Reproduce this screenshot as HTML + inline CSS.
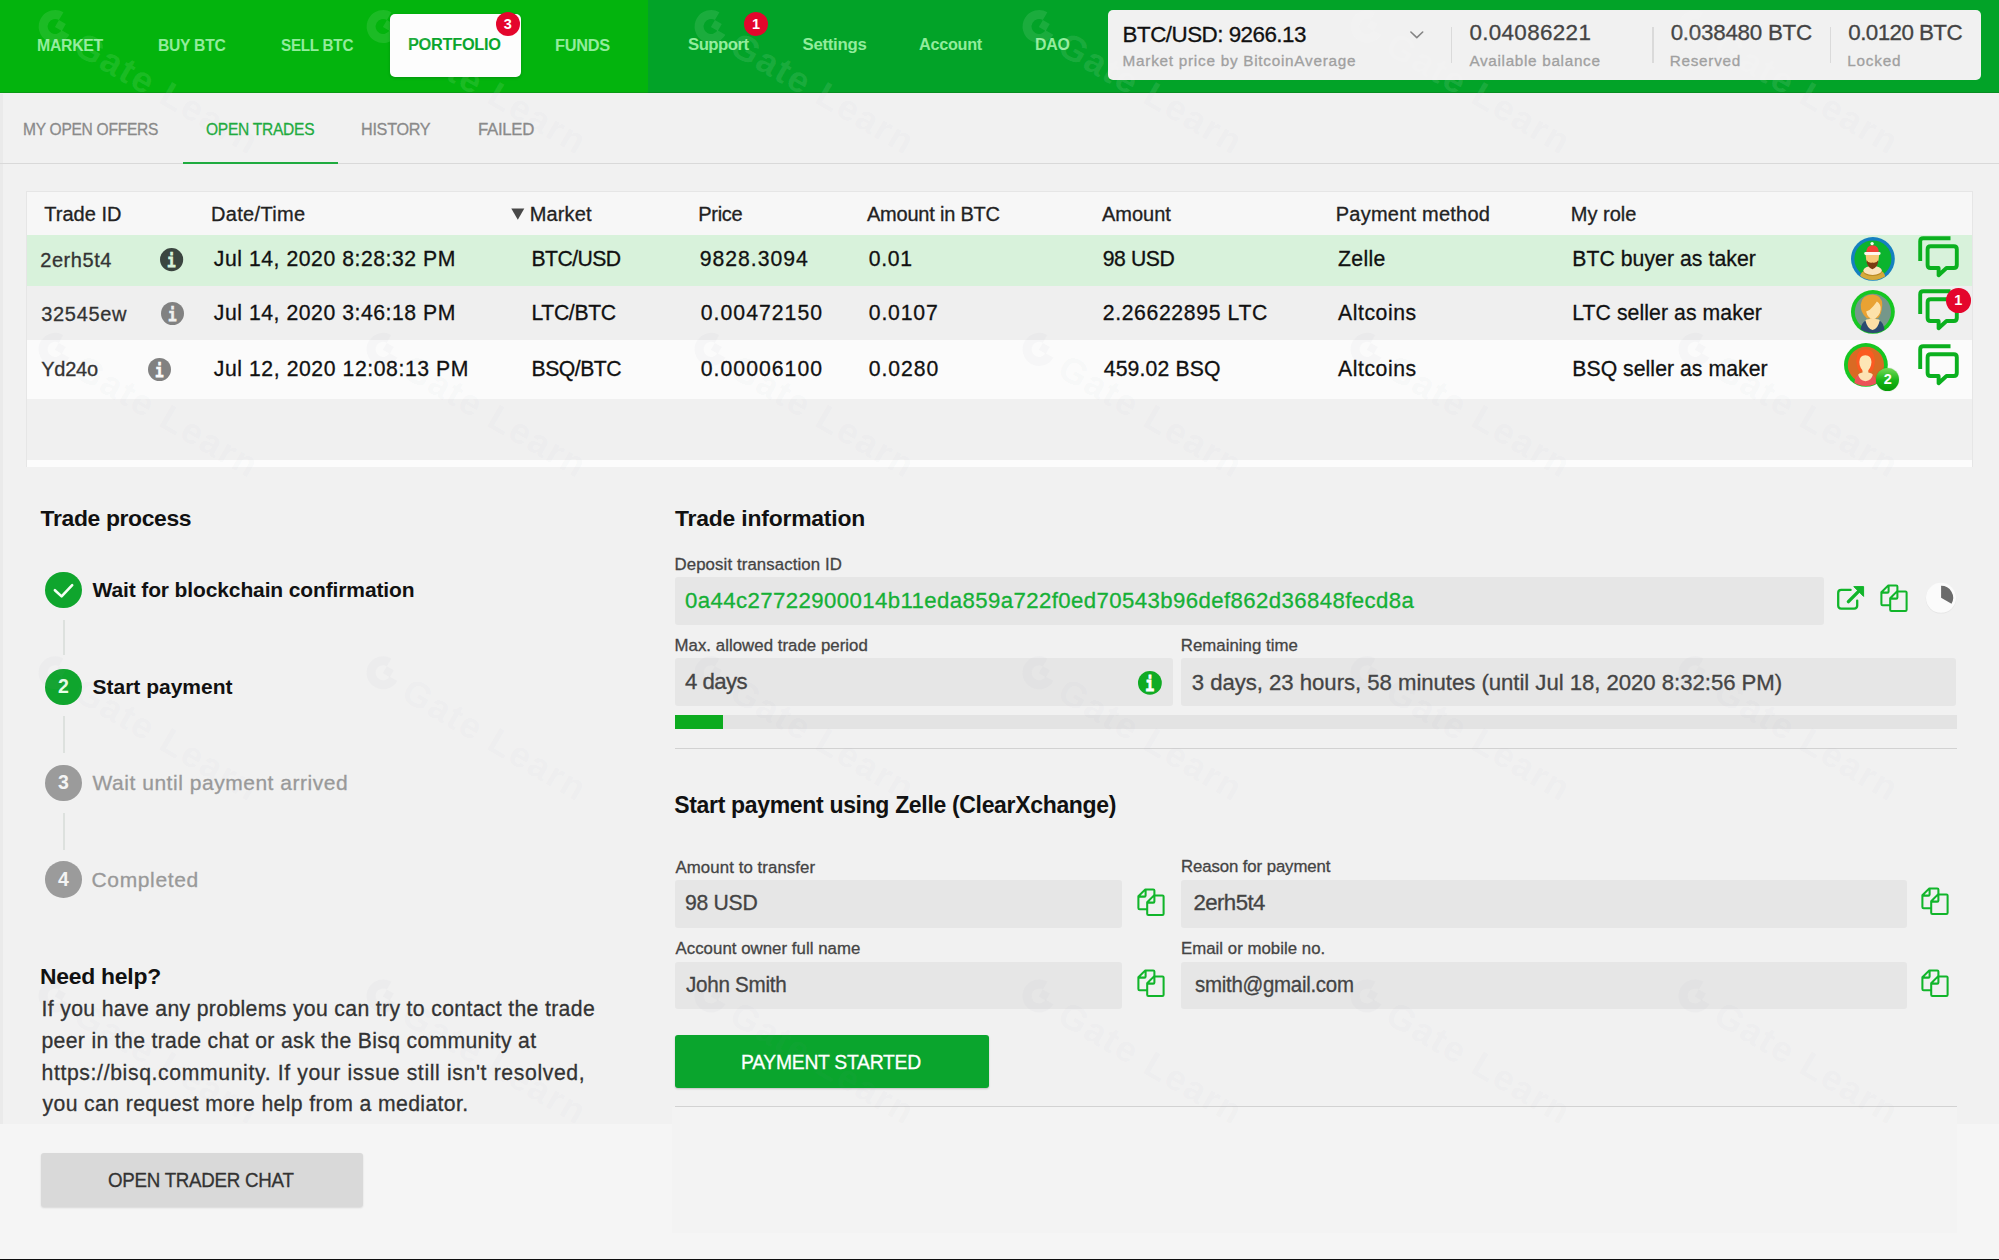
<!DOCTYPE html>
<html lang="en">
<head>
<meta charset="utf-8">
<title>Bisq - Portfolio - Open trades</title>
<style>
*{box-sizing:border-box;margin:0;padding:0}
html,body{width:1999px;height:1260px;overflow:hidden;background:#f1f1f1}
body{position:relative;font-family:"Liberation Sans",sans-serif}
.abs,.t{position:absolute}
.t{white-space:nowrap;line-height:1;transform-origin:0 50%;display:block;-webkit-text-stroke:0.3px currentColor}
.t.b{-webkit-text-stroke:0}
.badge{position:absolute;border-radius:50%;background:#e4062c;color:#fff;font-weight:700;text-align:center}
.field{position:absolute;background:#e6e6e6;border-radius:3px}
.lbl{color:#444}
svg{position:absolute;overflow:visible}
</style>
</head>
<body>
<!-- top navigation -->
<div class="abs" id="nav-left" style="left:0;top:0;width:648px;height:93.4px;background:#03b40d;border-bottom:1.6px solid #0a9a14"></div>
<div class="abs" id="nav-right" style="left:648px;top:0;width:1351px;height:93.4px;background:#02a328;border-bottom:1.6px solid #078e22"></div>
<div class="abs" id="nav-sel" style="left:389.6px;top:13.6px;width:131px;height:63px;background:#fdfdfd;border-radius:5px;box-shadow:0 1px 3px rgba(0,0,0,.18)"></div>
<div class="abs" id="infobox" style="left:1108px;top:10.2px;width:872.5px;height:69.4px;background:#f1f1f1;border-radius:5px"></div>
<div class="abs" style="left:1450.5px;top:27px;width:1.5px;height:36px;background:#dadada"></div>
<div class="abs" style="left:1652px;top:27px;width:1.5px;height:36px;background:#dadada"></div>
<div class="abs" style="left:1829.5px;top:27px;width:1.5px;height:36px;background:#dadada"></div>
<svg style="left:1408px;top:29px" width="18" height="12" viewBox="0 0 18 12"><path d="M2.9 3 L8.8 8.6 L14.7 3" fill="none" stroke="#848484" stroke-width="1.6" stroke-linecap="round" stroke-linejoin="round"/></svg>

<div class="abs" style="left:0;top:94px;width:2.8px;height:1164px;background:#eaeaea"></div>
<!-- sub tabs -->
<div class="abs" style="left:0;top:163px;width:1999px;height:1px;background:#d9d9d9"></div>
<div class="abs" style="left:182.5px;top:161.6px;width:155.7px;height:2.4px;background:#1fab3f"></div>

<!-- table -->
<div class="abs" id="table" style="left:25.5px;top:190.5px;width:1947.5px;height:276.5px;background:#f7f7f7;border:1px solid #e6e6e6"></div>
<div class="abs" style="left:26.5px;top:235px;width:1945.5px;height:51.3px;background:#d8f2db"></div>
<div class="abs" style="left:26.5px;top:286.3px;width:1945.5px;height:53.7px;background:#efefef"></div>
<div class="abs" style="left:26.5px;top:340px;width:1945.5px;height:59px;background:#fbfbfb"></div>
<div class="abs" style="left:26.5px;top:399px;width:1945.5px;height:60.5px;background:#f0f0f0"></div>
<div class="abs" style="left:26.5px;top:459.5px;width:1945.5px;height:7px;background:#fcfcfc"></div>
<svg style="left:511px;top:207.5px" width="14" height="12" viewBox="0 0 14 12"><path d="M0.3 0.5 H13.3 L6.8 11.8 Z" fill="#484848"/></svg>


<!-- left panel: trade process -->
<div class="abs" style="left:63px;top:620px;width:1.5px;height:35px;background:#dde1de"></div>
<div class="abs" style="left:63px;top:716px;width:1.6px;height:36.5px;background:#dde1de"></div>
<div class="abs" style="left:63px;top:813px;width:1.6px;height:36.5px;background:#dde1de"></div>
<div class="abs" style="left:45px;top:571.7px;width:36.7px;height:36.7px;border-radius:50%;background:#0fa52d"></div>
<svg style="left:45px;top:571.7px" width="36.7" height="36.7" viewBox="0 0 36.7 36.7"><path d="M9.9 18.2 L16.6 24.4 L27.2 13.1" fill="none" stroke="#f4fff4" stroke-width="2.6" stroke-linecap="round" stroke-linejoin="round"/></svg>
<div class="abs" style="left:45px;top:668.5px;width:36.7px;height:36.7px;border-radius:50%;background:#0fa52d"></div>
<div class="abs" style="left:45px;top:764.5px;width:36.7px;height:36.7px;border-radius:50%;background:#9b9b9b"></div>
<div class="abs" style="left:45px;top:861.3px;width:36.7px;height:36.7px;border-radius:50%;background:#9b9b9b"></div>

<!-- bottom lighter band -->
<div class="abs" style="left:0;top:1124px;width:1999px;height:136px;background:#f5f5f5"></div>
<div class="abs" style="left:672px;top:1107px;width:1285px;height:125.5px;background:#f3f3f3"></div>
<div class="abs" id="btn-chat" style="left:41px;top:1152.6px;width:321.8px;height:54px;background:#d9d9d9;border-radius:3px;box-shadow:0 1px 2px rgba(0,0,0,.12)"></div>

<!-- right panel -->
<div class="field" style="left:674.5px;top:576.5px;width:1149px;height:48px"></div>
<div class="field" style="left:674.5px;top:658.4px;width:498px;height:47.8px"></div>
<div class="field" style="left:1181.2px;top:658.4px;width:775.3px;height:47.8px"></div>
<div class="abs" style="left:674.5px;top:714.8px;width:1282.5px;height:14.4px;background:#e3e3e3"></div>
<div class="abs" style="left:674.5px;top:714.8px;width:48.5px;height:14.4px;background:#0cab1f"></div>
<div class="abs" style="left:674.5px;top:748px;width:1282.5px;height:1.2px;background:#d2d2d2"></div>
<div class="field" style="left:674.5px;top:880px;width:447.7px;height:47.5px"></div>
<div class="field" style="left:1181.2px;top:880px;width:725.5px;height:47.5px"></div>
<div class="field" style="left:674.5px;top:962px;width:447.7px;height:47px"></div>
<div class="field" style="left:1181.2px;top:962px;width:725.5px;height:47px"></div>
<div class="abs" id="btn-pay" style="left:674.5px;top:1034.5px;width:314.3px;height:53px;background:#0aa52d;border-radius:3px;box-shadow:0 1px 2px rgba(0,0,0,.2)"></div>
<div class="abs" style="left:674.5px;top:1105.8px;width:1282.5px;height:1.2px;background:#d2d2d2"></div>

<svg width="0" height="0" style="left:0;top:0">
<defs>
<clipPath id="avc"><circle cx="22" cy="22" r="21.3"/></clipPath>
</defs>
</svg>
<!-- info icons in table -->
<svg class="ic-info" style="left:160.1px;top:248.3px;fill:#3b4540;--ic:#d8f2db" width="23.2" height="23.2" viewBox="0 0 23 23"><circle cx="11.5" cy="11.5" r="11.5"/><text x="11.3" y="19" text-anchor="middle" font-family="DejaVu Sans Mono, Liberation Mono, monospace" font-weight="bold" font-size="18" fill="var(--ic,#fff)" stroke="var(--ic,#fff)" stroke-width=".75" textLength="8.6" lengthAdjust="spacingAndGlyphs">i</text></svg>
<svg class="ic-info" style="left:160.9px;top:301.9px;fill:#818181;--ic:#efefef" width="23" height="23" viewBox="0 0 23 23"><circle cx="11.5" cy="11.5" r="11.5"/><text x="11.3" y="19" text-anchor="middle" font-family="DejaVu Sans Mono, Liberation Mono, monospace" font-weight="bold" font-size="18" fill="var(--ic,#fff)" stroke="var(--ic,#fff)" stroke-width=".75" textLength="8.6" lengthAdjust="spacingAndGlyphs">i</text></svg>
<svg class="ic-info" style="left:148.3px;top:358.2px;fill:#818181;--ic:#fbfbfb" width="23" height="23" viewBox="0 0 23 23"><circle cx="11.5" cy="11.5" r="11.5"/><text x="11.3" y="19" text-anchor="middle" font-family="DejaVu Sans Mono, Liberation Mono, monospace" font-weight="bold" font-size="18" fill="var(--ic,#fff)" stroke="var(--ic,#fff)" stroke-width=".75" textLength="8.6" lengthAdjust="spacingAndGlyphs">i</text></svg>
<svg class="ic-info" style="left:1137.5px;top:671.2px;fill:#10ab24;--ic:#fff" width="23.8" height="23.8" viewBox="0 0 23 23"><circle cx="11.5" cy="11.5" r="11.5"/><text x="11.3" y="19" text-anchor="middle" font-family="DejaVu Sans Mono, Liberation Mono, monospace" font-weight="bold" font-size="18" fill="var(--ic,#fff)" stroke="var(--ic,#fff)" stroke-width=".75" textLength="8.6" lengthAdjust="spacingAndGlyphs">i</text></svg>

<!-- avatars -->
<svg style="left:1850.6px;top:237px" width="43.8" height="43.8" viewBox="0 0 44 44">
<circle cx="22" cy="22" r="22" fill="#1580c0"/><circle cx="22" cy="22" r="18.6" fill="#0bb42e"/>
<g clip-path="url(#avc)"><ellipse cx="21.7" cy="40" rx="12.6" ry="8.4" fill="#d5a93a"/><ellipse cx="21.7" cy="34.4" rx="9.5" ry="4.9" fill="#b98a25"/><ellipse cx="21.7" cy="33.6" rx="9.2" ry="4.5" fill="#fbe4bb"/>
<path d="M14.6 17 H28.4 L27.6 23.5 Q26 29 21.5 30 Q17 29 15.4 23.5 Z" fill="#f9c877"/>
<path d="M15.6 23 Q17.5 26.6 21.5 25.6 Q25.5 26.6 27.4 23 Q27.6 29.6 21.5 32.4 Q15.4 29.6 15.6 23 Z" fill="#7a3a12"/>
<path d="M15.3 16.5 Q15.3 8.4 21.6 8.4 Q28 8.4 28 16.5 Z" fill="#ef4136"/>
<rect x="13.3" y="15.1" width="16.4" height="2.9" rx="1.3" fill="#fff7ee"/><circle cx="21.2" cy="6.6" r="1.7" fill="#f4fff0"/></g></svg>

<svg style="left:1850.7px;top:290.4px" width="43.8" height="43.8" viewBox="0 0 44 44">
<circle cx="22" cy="22" r="22" fill="#16c722"/><circle cx="22" cy="22" r="18.2" fill="#75978a"/>
<g clip-path="url(#avc)"><path d="M9 44 Q9.5 31.5 16 30.6 H27.4 Q33.6 31.5 34 44 Z" fill="#2b4b70"/>
<path d="M14.6 30.8 Q14.4 29.6 18.8 29.2 V25 H24.6 V29.2 Q29 29.6 28.8 30.8 Q27 39 21.7 40.2 Q16.4 39 14.6 30.8 Z" fill="#fde0a6"/>
<path d="M21.8 4.4 Q31.6 5 31.4 15 Q31 24 27 28.4 L16 28.6 Q9.4 23 9.8 14.6 Q10.4 5 21.8 4.4 Z" fill="#e9a233"/>
<path d="M26 11.6 Q30.4 14.6 29.8 19.6 Q29 26.6 22.6 29.4 Q16.6 28.4 15.2 21.6 Q19 20.6 22.6 16 Q24.8 13.4 26 11.6 Z" fill="#fde2aa"/></g></svg>

<svg style="left:1843.8px;top:343.4px" width="43.8" height="43.8" viewBox="0 0 44 44">
<circle cx="22" cy="22" r="22" fill="#16c722"/><circle cx="22" cy="22" r="18.2" fill="#d96a24"/>
<g clip-path="url(#avc)"><path d="M10 44 Q10.4 32.4 16 31.6 H27 Q32.6 32.4 33 44 Z" fill="#ec5358"/>
<path d="M12.4 17.4 Q12.6 6.6 21.6 6.4 Q30.8 6.6 31 17.4 Q31 24 28 28.6 H15.4 Q12.4 24 12.4 17.4 Z" fill="#fb5a22"/>
<path d="M14.2 32 Q14.6 30.4 18.6 29.6 V26 H24.4 V29.6 Q28.6 30.4 29 32 Q27.6 37.6 21.6 38.4 Q15.6 37.6 14.2 32 Z" fill="#fde2b4"/>
<path d="M21.4 12.2 Q27.4 12.4 27.6 19 Q27.4 26.6 21.4 29.2 Q15.6 26.6 15.4 19 Q15.6 12.4 21.4 12.2 Z" fill="#fde6b6"/></g></svg>
<div class="abs" style="left:1876.4px;top:368px;width:23px;height:23px;border-radius:50%;background:linear-gradient(#74d957,#16b516 55%,#069a06);box-shadow:0 0 1px rgba(0,90,0,.5)"></div>

<!-- chat icons -->
<svg class="ic-chat" style="left:1917.9px;top:235.9px" width="42" height="42" viewBox="0 0 42 42"><path d="M2.2 25 V5.2 Q2.2 2.2 5.2 2.2 H32.5" fill="none" stroke="#0bb01f" stroke-width="3.9" stroke-linecap="butt"/><path d="M12.6 10.2 H35.8 Q38.8 10.2 38.8 13.2 V29 Q38.8 32 35.8 32 H28.5 L20.6 39.2 V32 H12.6 Q9.6 32 9.6 29 V13.2 Q9.6 10.2 12.6 10.2 Z" fill="none" stroke="#0bb01f" stroke-width="3.9" stroke-linejoin="round"/></svg>
<svg class="ic-chat" style="left:1917.9px;top:289.2px" width="42" height="42" viewBox="0 0 42 42"><path d="M2.2 25 V5.2 Q2.2 2.2 5.2 2.2 H32.5" fill="none" stroke="#0bb01f" stroke-width="3.9" stroke-linecap="butt"/><path d="M12.6 10.2 H35.8 Q38.8 10.2 38.8 13.2 V29 Q38.8 32 35.8 32 H28.5 L20.6 39.2 V32 H12.6 Q9.6 32 9.6 29 V13.2 Q9.6 10.2 12.6 10.2 Z" fill="none" stroke="#0bb01f" stroke-width="3.9" stroke-linejoin="round"/></svg>
<svg class="ic-chat" style="left:1917.9px;top:344.4px" width="42" height="42" viewBox="0 0 42 42"><path d="M2.2 25 V5.2 Q2.2 2.2 5.2 2.2 H32.5" fill="none" stroke="#0bb01f" stroke-width="3.9" stroke-linecap="butt"/><path d="M12.6 10.2 H35.8 Q38.8 10.2 38.8 13.2 V29 Q38.8 32 35.8 32 H28.5 L20.6 39.2 V32 H12.6 Q9.6 32 9.6 29 V13.2 Q9.6 10.2 12.6 10.2 Z" fill="none" stroke="#0bb01f" stroke-width="3.9" stroke-linejoin="round"/></svg>

<!-- badges -->
<div class="badge" style="left:495.6px;top:11.8px;width:24.4px;height:24.4px"></div>
<div class="badge" style="left:743.8px;top:11.8px;width:24.4px;height:24.4px"></div>
<div class="badge" style="left:1946px;top:288.2px;width:24.6px;height:24.6px"></div>

<!-- tx icons -->
<svg style="left:1836.4px;top:585px" width="29" height="26" viewBox="0 0 29 26"><path d="M14.6 4.9 H5.2 Q2.2 4.9 2.2 7.9 V20.6 Q2.2 23.6 5.2 23.6 H18.2 Q21.2 23.6 21.2 20.6 V15.6" fill="none" stroke="#11b52a" stroke-width="2.3" stroke-linecap="round"/><path d="M12.4 16.6 L23.6 5.4" fill="none" stroke="#11b52a" stroke-width="3.4" stroke-linecap="round"/><path d="M17.8 1.6 H27.6 V11.4 Z" fill="#11b52a" stroke="#11b52a" stroke-width="1" stroke-linejoin="round"/></svg>
<svg class="ic-copy" style="left:1880.2px;top:584.4px" width="28" height="28" viewBox="0 0 28 28"><path d="M10 21.2 H2.6 Q1.4 21.2 1.4 20 V8.3 L8.3 1.4 H16.2 Q17.4 1.4 17.4 2.6 V7.2 M1.6 8.6 H7.4 Q8.6 8.6 8.6 7.4 V1.6" fill="none" stroke="#11b52a" stroke-width="2.05" stroke-linejoin="round"/><path d="M10.2 14.2 L17 7.4 H25.4 Q26.6 7.4 26.6 8.6 V25.8 Q26.6 27 25.4 27 H11.4 Q10.2 27 10.2 25.8 Z M10.4 14.6 H16.2 Q17.4 14.6 17.4 13.4 V7.6" fill="none" stroke="#11b52a" stroke-width="2.05" stroke-linejoin="round"/></svg>
<svg class="ic-copy" style="left:1136.9px;top:887.6px" width="28" height="28" viewBox="0 0 28 28"><path d="M10 21.2 H2.6 Q1.4 21.2 1.4 20 V8.3 L8.3 1.4 H16.2 Q17.4 1.4 17.4 2.6 V7.2 M1.6 8.6 H7.4 Q8.6 8.6 8.6 7.4 V1.6" fill="none" stroke="#11b52a" stroke-width="2.05" stroke-linejoin="round"/><path d="M10.2 14.2 L17 7.4 H25.4 Q26.6 7.4 26.6 8.6 V25.8 Q26.6 27 25.4 27 H11.4 Q10.2 27 10.2 25.8 Z M10.4 14.6 H16.2 Q17.4 14.6 17.4 13.4 V7.6" fill="none" stroke="#11b52a" stroke-width="2.05" stroke-linejoin="round"/></svg>
<svg class="ic-copy" style="left:1136.9px;top:969.4px" width="28" height="28" viewBox="0 0 28 28"><path d="M10 21.2 H2.6 Q1.4 21.2 1.4 20 V8.3 L8.3 1.4 H16.2 Q17.4 1.4 17.4 2.6 V7.2 M1.6 8.6 H7.4 Q8.6 8.6 8.6 7.4 V1.6" fill="none" stroke="#11b52a" stroke-width="2.05" stroke-linejoin="round"/><path d="M10.2 14.2 L17 7.4 H25.4 Q26.6 7.4 26.6 8.6 V25.8 Q26.6 27 25.4 27 H11.4 Q10.2 27 10.2 25.8 Z M10.4 14.6 H16.2 Q17.4 14.6 17.4 13.4 V7.6" fill="none" stroke="#11b52a" stroke-width="2.05" stroke-linejoin="round"/></svg>
<svg class="ic-copy" style="left:1921.4px;top:887.4px" width="28" height="28" viewBox="0 0 28 28"><path d="M10 21.2 H2.6 Q1.4 21.2 1.4 20 V8.3 L8.3 1.4 H16.2 Q17.4 1.4 17.4 2.6 V7.2 M1.6 8.6 H7.4 Q8.6 8.6 8.6 7.4 V1.6" fill="none" stroke="#11b52a" stroke-width="2.05" stroke-linejoin="round"/><path d="M10.2 14.2 L17 7.4 H25.4 Q26.6 7.4 26.6 8.6 V25.8 Q26.6 27 25.4 27 H11.4 Q10.2 27 10.2 25.8 Z M10.4 14.6 H16.2 Q17.4 14.6 17.4 13.4 V7.6" fill="none" stroke="#11b52a" stroke-width="2.05" stroke-linejoin="round"/></svg>
<svg class="ic-copy" style="left:1921.4px;top:969.2px" width="28" height="28" viewBox="0 0 28 28"><path d="M10 21.2 H2.6 Q1.4 21.2 1.4 20 V8.3 L8.3 1.4 H16.2 Q17.4 1.4 17.4 2.6 V7.2 M1.6 8.6 H7.4 Q8.6 8.6 8.6 7.4 V1.6" fill="none" stroke="#11b52a" stroke-width="2.05" stroke-linejoin="round"/><path d="M10.2 14.2 L17 7.4 H25.4 Q26.6 7.4 26.6 8.6 V25.8 Q26.6 27 25.4 27 H11.4 Q10.2 27 10.2 25.8 Z M10.4 14.6 H16.2 Q17.4 14.6 17.4 13.4 V7.6" fill="none" stroke="#11b52a" stroke-width="2.05" stroke-linejoin="round"/></svg>
<svg style="left:1924.7px;top:582px" width="32" height="32" viewBox="0 0 32 32"><circle cx="16" cy="16.4" r="15.2" fill="#e0e0e0" opacity=".7"/><circle cx="16" cy="15.8" r="15" fill="#fbfbfb"/><path d="M16.1 15.8 V3.8 A12 12 0 0 1 26.5 21.8 Z" fill="#6b6b6b"/></svg>


<!-- bottom black line -->
<div class="abs" style="left:0;top:1258.6px;width:1999px;height:1.4px;background:#0c0c0c"></div>

<span class="t b" style="left:36.60px;top:38.00px;font-size:16.8px;font-weight:700;color:#92ec9c;letter-spacing:-0.300px;transform:scaleX(0.9425);">MARKET</span>
<span class="t b" style="left:158.00px;top:38.00px;font-size:16.8px;font-weight:700;color:#92ec9c;letter-spacing:-0.300px;transform:scaleX(0.9349);">BUY BTC</span>
<span class="t b" style="left:281.00px;top:38.00px;font-size:16.8px;font-weight:700;color:#92ec9c;letter-spacing:-0.300px;transform:scaleX(0.9096);">SELL BTC</span>
<span class="t b" style="left:408.00px;top:37.00px;font-size:16.8px;font-weight:700;color:#0ba52d;letter-spacing:-0.300px;transform:scaleX(0.9742);">PORTFOLIO</span>
<span class="t b" style="left:555.00px;top:38.00px;font-size:16.8px;font-weight:700;color:#92ec9c;letter-spacing:-0.300px;transform:scaleX(0.9746);">FUNDS</span>
<span class="t b" style="left:688.00px;top:37.00px;font-size:16.8px;font-weight:700;color:#92ec9c;letter-spacing:-0.554px;">Support</span>
<span class="t b" style="left:802.60px;top:37.00px;font-size:16.8px;font-weight:700;color:#92ec9c;letter-spacing:-0.295px;">Settings</span>
<span class="t b" style="left:919.00px;top:37.00px;font-size:16.8px;font-weight:700;color:#92ec9c;letter-spacing:-0.300px;transform:scaleX(0.9675);">Account</span>
<span class="t b" style="left:1034.60px;top:37.00px;font-size:16.8px;font-weight:700;color:#92ec9c;letter-spacing:-0.300px;transform:scaleX(0.9484);">DAO</span>
<span class="t" style="left:1122.60px;top:24.00px;font-size:22.4px;color:#111;letter-spacing:-0.520px;">BTC/USD: 9266.13</span>
<span class="t" style="left:1122.60px;top:53.00px;font-size:15.3px;color:#a0a0a0;letter-spacing:0.741px;">Market price by BitcoinAverage</span>
<span class="t" style="left:1469.40px;top:22.00px;font-size:22.4px;color:#444;letter-spacing:0.351px;">0.04086221</span>
<span class="t" style="left:1469.40px;top:53.00px;font-size:15.3px;color:#a0a0a0;letter-spacing:0.680px;">Available balance</span>
<span class="t" style="left:1670.70px;top:22.00px;font-size:22.4px;color:#444;letter-spacing:-0.266px;">0.038480 BTC</span>
<span class="t" style="left:1669.70px;top:53.00px;font-size:15.3px;color:#a0a0a0;letter-spacing:0.734px;">Reserved</span>
<span class="t" style="left:1848.30px;top:22.00px;font-size:22.4px;color:#444;letter-spacing:-0.580px;">0.0120 BTC</span>
<span class="t" style="left:1847.30px;top:53.00px;font-size:15.3px;color:#a0a0a0;letter-spacing:0.776px;">Locked</span>
<span class="t" style="left:23.00px;top:121.00px;font-size:17.4px;color:#8a8a8a;letter-spacing:-0.300px;transform:scaleX(0.8943);">MY OPEN OFFERS</span>
<span class="t" style="left:205.90px;top:121.00px;font-size:17.4px;color:#1fab3f;letter-spacing:-0.300px;transform:scaleX(0.8946);">OPEN TRADES</span>
<span class="t" style="left:360.60px;top:121.00px;font-size:17.4px;color:#8a8a8a;letter-spacing:-0.300px;transform:scaleX(0.9304);">HISTORY</span>
<span class="t" style="left:478.30px;top:121.00px;font-size:17.4px;color:#8a8a8a;letter-spacing:-0.300px;transform:scaleX(0.9654);">FAILED</span>
<span class="t" style="left:44.25px;top:204.00px;font-size:20px;color:#222;letter-spacing:0.019px;">Trade ID</span>
<span class="t" style="left:211.00px;top:204.00px;font-size:20px;color:#222;letter-spacing:0.327px;">Date/Time</span>
<span class="t" style="left:529.75px;top:204.00px;font-size:20px;color:#222;letter-spacing:0.137px;">Market</span>
<span class="t" style="left:698.25px;top:204.00px;font-size:20px;color:#222;letter-spacing:-0.298px;">Price</span>
<span class="t" style="left:867.00px;top:204.00px;font-size:20px;color:#222;letter-spacing:-0.222px;">Amount in BTC</span>
<span class="t" style="left:1102.00px;top:204.00px;font-size:20px;color:#222;letter-spacing:-0.024px;">Amount</span>
<span class="t" style="left:1335.75px;top:204.00px;font-size:20px;color:#222;letter-spacing:0.226px;">Payment method</span>
<span class="t" style="left:1570.75px;top:204.00px;font-size:20px;color:#222;letter-spacing:0.009px;">My role</span>
<span class="t" style="left:40.25px;top:250.00px;font-size:20px;color:#333;letter-spacing:0.549px;">2erh5t4</span>
<span class="t" style="left:213.75px;top:248.00px;font-size:21.2px;color:#111;letter-spacing:0.544px;">Jul 14, 2020 8:28:32 PM</span>
<span class="t" style="left:531.50px;top:248.00px;font-size:21.2px;color:#111;letter-spacing:-0.574px;">BTC/USD</span>
<span class="t" style="left:699.75px;top:248.00px;font-size:21.2px;color:#111;letter-spacing:0.985px;">9828.3094</span>
<span class="t" style="left:868.75px;top:248.00px;font-size:21.2px;color:#111;letter-spacing:0.682px;">0.01</span>
<span class="t" style="left:1102.75px;top:248.00px;font-size:21.2px;color:#111;letter-spacing:-0.427px;">98 USD</span>
<span class="t" style="left:1338.00px;top:248.00px;font-size:21.2px;color:#111;letter-spacing:0.340px;">Zelle</span>
<span class="t" style="left:1572.25px;top:248.00px;font-size:21.2px;color:#111;letter-spacing:0.061px;">BTC buyer as taker</span>
<span class="t" style="left:41.25px;top:304.00px;font-size:20px;color:#333;letter-spacing:0.669px;">32545ew</span>
<span class="t" style="left:213.75px;top:302.00px;font-size:21.2px;color:#111;letter-spacing:0.544px;">Jul 14, 2020 3:46:18 PM</span>
<span class="t" style="left:531.50px;top:302.00px;font-size:21.2px;color:#111;letter-spacing:-0.361px;">LTC/BTC</span>
<span class="t" style="left:700.75px;top:302.00px;font-size:21.2px;color:#111;letter-spacing:1.038px;">0.00472150</span>
<span class="t" style="left:868.75px;top:302.00px;font-size:21.2px;color:#111;letter-spacing:0.846px;">0.0107</span>
<span class="t" style="left:1102.75px;top:302.00px;font-size:21.2px;color:#111;letter-spacing:0.636px;">2.26622895 LTC</span>
<span class="t" style="left:1338.00px;top:302.00px;font-size:21.2px;color:#111;letter-spacing:0.558px;">Altcoins</span>
<span class="t" style="left:1572.25px;top:302.00px;font-size:21.2px;color:#111;letter-spacing:0.087px;">LTC seller as maker</span>
<span class="t" style="left:41.25px;top:359.00px;font-size:20px;color:#333;letter-spacing:-0.240px;">Yd24o</span>
<span class="t" style="left:213.75px;top:358.00px;font-size:21.2px;color:#111;letter-spacing:0.573px;">Jul 12, 2020 12:08:13 PM</span>
<span class="t" style="left:531.50px;top:358.00px;font-size:21.2px;color:#111;letter-spacing:-0.492px;">BSQ/BTC</span>
<span class="t" style="left:700.75px;top:358.00px;font-size:21.2px;color:#111;letter-spacing:1.038px;">0.00006100</span>
<span class="t" style="left:868.75px;top:358.00px;font-size:21.2px;color:#111;letter-spacing:0.946px;">0.0280</span>
<span class="t" style="left:1103.75px;top:358.00px;font-size:21.2px;color:#111;letter-spacing:0.144px;">459.02 BSQ</span>
<span class="t" style="left:1338.00px;top:358.00px;font-size:21.2px;color:#111;letter-spacing:0.558px;">Altcoins</span>
<span class="t" style="left:1572.25px;top:358.00px;font-size:21.2px;color:#111;letter-spacing:0.057px;">BSQ seller as maker</span>
<span class="t b" style="left:40.60px;top:507.00px;font-size:22.9px;font-weight:700;color:#111;letter-spacing:-0.358px;">Trade process</span>
<span class="t b" style="left:92.50px;top:579.00px;font-size:21px;font-weight:700;color:#111;letter-spacing:-0.124px;">Wait for blockchain confirmation</span>
<span class="t b" style="left:92.50px;top:676.00px;font-size:21px;font-weight:700;color:#111;letter-spacing:-0.004px;">Start payment</span>
<span class="t" style="left:92.50px;top:772.00px;font-size:21px;color:#999;letter-spacing:0.528px;">Wait until payment arrived</span>
<span class="t" style="left:91.50px;top:869.00px;font-size:21px;color:#999;letter-spacing:0.641px;">Completed</span>
<span class="t b" style="left:40.00px;top:965.00px;font-size:22.9px;font-weight:700;color:#111;letter-spacing:-0.243px;">Need help?</span>
<span class="t" style="left:41.50px;top:998.00px;font-size:21.2px;color:#333;letter-spacing:0.351px;">If you have any problems you can try to contact the trade</span>
<span class="t" style="left:41.50px;top:1030.00px;font-size:21.2px;color:#333;letter-spacing:0.329px;">peer in the trade chat or ask the Bisq community at</span>
<span class="t" style="left:41.50px;top:1062.00px;font-size:21.2px;color:#333;letter-spacing:0.633px;">https://bisq.community. If your issue still isn't resolved,</span>
<span class="t" style="left:42.50px;top:1093.00px;font-size:21.2px;color:#333;letter-spacing:0.387px;">you can request more help from a mediator.</span>
<span class="t" style="left:108.10px;top:1169.00px;font-size:21px;color:#333;letter-spacing:-0.300px;transform:scaleX(0.8927);">OPEN TRADER CHAT</span>
<span class="t b" style="left:675.00px;top:507.00px;font-size:22.9px;font-weight:700;color:#111;letter-spacing:-0.193px;">Trade information</span>
<span class="t" style="left:674.50px;top:557.00px;font-size:16.8px;color:#444;letter-spacing:0.108px;">Deposit transaction ID</span>
<span class="t" style="left:685.00px;top:590.00px;font-size:22.2px;color:#15b035;letter-spacing:0.405px;">0a44c27722900014b11eda859a722f0ed70543b96def862d36848fecd8a</span>
<span class="t" style="left:674.50px;top:638.00px;font-size:16.8px;color:#444;letter-spacing:0.049px;">Max. allowed trade period</span>
<span class="t" style="left:685.00px;top:671.00px;font-size:22.2px;color:#444;letter-spacing:-0.555px;">4 days</span>
<span class="t" style="left:1180.75px;top:638.00px;font-size:16.8px;color:#444;letter-spacing:0.038px;">Remaining time</span>
<span class="t" style="left:1191.75px;top:672.00px;font-size:22.2px;color:#444;letter-spacing:-0.048px;">3 days, 23 hours, 58 minutes (until Jul 18, 2020 8:32:56 PM)</span>
<span class="t b" style="left:674.25px;top:794.00px;font-size:23px;font-weight:700;color:#111;letter-spacing:-0.329px;">Start payment using Zelle (ClearXchange)</span>
<span class="t" style="left:675.50px;top:860.00px;font-size:16.8px;color:#444;letter-spacing:0.091px;">Amount to transfer</span>
<span class="t" style="left:684.50px;top:892.00px;font-size:22.2px;color:#444;letter-spacing:-0.300px;transform:scaleX(0.9539);">98 USD</span>
<span class="t" style="left:1181.00px;top:859.00px;font-size:16.8px;color:#444;letter-spacing:-0.100px;">Reason for payment</span>
<span class="t" style="left:1193.50px;top:892.00px;font-size:22.2px;color:#444;letter-spacing:-0.569px;">2erh5t4</span>
<span class="t" style="left:675.50px;top:941.00px;font-size:16.8px;color:#444;letter-spacing:0.049px;">Account owner full name</span>
<span class="t" style="left:685.50px;top:974.00px;font-size:22.2px;color:#444;letter-spacing:-0.300px;transform:scaleX(0.9303);">John Smith</span>
<span class="t" style="left:1181.00px;top:941.00px;font-size:16.8px;color:#444;letter-spacing:0.029px;">Email or mobile no.</span>
<span class="t" style="left:1194.50px;top:974.00px;font-size:22.2px;color:#444;letter-spacing:-0.300px;transform:scaleX(0.9218);">smith@gmail.com</span>
<span class="t" style="left:741.00px;top:1052.00px;font-size:20.5px;color:#fff;letter-spacing:-0.300px;transform:scaleX(0.9431);">PAYMENT STARTED</span>
<span class="t b" style="left:487.80px;top:16.73px;width:40px;text-align:center;font-size:14.5px;font-weight:700;color:#fff">3</span>
<span class="t b" style="left:736.00px;top:16.73px;width:40px;text-align:center;font-size:14.5px;font-weight:700;color:#fff">1</span>
<span class="t b" style="left:1938.30px;top:293.23px;width:40px;text-align:center;font-size:14.5px;font-weight:700;color:#fff">1</span>
<span class="t b" style="left:1867.90px;top:372.33px;width:40px;text-align:center;font-size:14.5px;font-weight:700;color:#fff">2</span>
<span class="t b" style="left:43.40px;top:677.12px;width:40px;text-align:center;font-size:19.5px;font-weight:700;color:#e8ffe8">2</span>
<span class="t b" style="left:43.40px;top:773.12px;width:40px;text-align:center;font-size:19.5px;font-weight:700;color:#f4f4f4">3</span>
<span class="t b" style="left:43.40px;top:869.92px;width:40px;text-align:center;font-size:19.5px;font-weight:700;color:#f4f4f4">4</span>
<svg id="watermark-nav" style="left:0;top:0px;pointer-events:none;overflow:hidden" width="1999" height="93.4" viewBox="0 0 1999 93.4" fill="rgba(255,255,255,0.10)" font-family="Liberation Sans, sans-serif" font-weight="bold" font-size="36">
<g transform="translate(73.6 52.3) rotate(30.2)"><path d="M-29 -25 A12 12 0 1 0 -17 -13" fill="none" stroke="rgba(255,255,255,0.10)" stroke-width="9"/><rect x="-29" y="-20.5" width="8" height="8"/><text x="-2" y="1" textLength="205" lengthAdjust="spacing">Gate Learn</text></g>
<g transform="translate(401.6 52.3) rotate(30.2)"><path d="M-29 -25 A12 12 0 1 0 -17 -13" fill="none" stroke="rgba(255,255,255,0.10)" stroke-width="9"/><rect x="-29" y="-20.5" width="8" height="8"/><text x="-2" y="1" textLength="205" lengthAdjust="spacing">Gate Learn</text></g>
<g transform="translate(729.6 52.3) rotate(30.2)"><path d="M-29 -25 A12 12 0 1 0 -17 -13" fill="none" stroke="rgba(255,255,255,0.10)" stroke-width="9"/><rect x="-29" y="-20.5" width="8" height="8"/><text x="-2" y="1" textLength="205" lengthAdjust="spacing">Gate Learn</text></g>
<g transform="translate(1057.6 52.3) rotate(30.2)"><path d="M-29 -25 A12 12 0 1 0 -17 -13" fill="none" stroke="rgba(255,255,255,0.10)" stroke-width="9"/><rect x="-29" y="-20.5" width="8" height="8"/><text x="-2" y="1" textLength="205" lengthAdjust="spacing">Gate Learn</text></g>
<g transform="translate(1385.6 52.3) rotate(30.2)"><path d="M-29 -25 A12 12 0 1 0 -17 -13" fill="none" stroke="rgba(255,255,255,0.10)" stroke-width="9"/><rect x="-29" y="-20.5" width="8" height="8"/><text x="-2" y="1" textLength="205" lengthAdjust="spacing">Gate Learn</text></g>
<g transform="translate(1713.6 52.3) rotate(30.2)"><path d="M-29 -25 A12 12 0 1 0 -17 -13" fill="none" stroke="rgba(255,255,255,0.10)" stroke-width="9"/><rect x="-29" y="-20.5" width="8" height="8"/><text x="-2" y="1" textLength="205" lengthAdjust="spacing">Gate Learn</text></g>
</svg>
<svg id="watermark" style="left:0;top:93.4px;pointer-events:none;overflow:hidden" width="1999" height="1166.6" viewBox="0 93.4 1999 1166.6" fill="rgba(150,160,178,0.05)" font-family="Liberation Sans, sans-serif" font-weight="bold" font-size="36">
<g transform="translate(73.6 52.3) rotate(30.2)"><path d="M-29 -25 A12 12 0 1 0 -17 -13" fill="none" stroke="rgba(150,160,178,0.05)" stroke-width="9"/><rect x="-29" y="-20.5" width="8" height="8"/><text x="-2" y="1" textLength="205" lengthAdjust="spacing">Gate Learn</text></g>
<g transform="translate(401.6 52.3) rotate(30.2)"><path d="M-29 -25 A12 12 0 1 0 -17 -13" fill="none" stroke="rgba(150,160,178,0.05)" stroke-width="9"/><rect x="-29" y="-20.5" width="8" height="8"/><text x="-2" y="1" textLength="205" lengthAdjust="spacing">Gate Learn</text></g>
<g transform="translate(729.6 52.3) rotate(30.2)"><path d="M-29 -25 A12 12 0 1 0 -17 -13" fill="none" stroke="rgba(150,160,178,0.05)" stroke-width="9"/><rect x="-29" y="-20.5" width="8" height="8"/><text x="-2" y="1" textLength="205" lengthAdjust="spacing">Gate Learn</text></g>
<g transform="translate(1057.6 52.3) rotate(30.2)"><path d="M-29 -25 A12 12 0 1 0 -17 -13" fill="none" stroke="rgba(150,160,178,0.05)" stroke-width="9"/><rect x="-29" y="-20.5" width="8" height="8"/><text x="-2" y="1" textLength="205" lengthAdjust="spacing">Gate Learn</text></g>
<g transform="translate(1385.6 52.3) rotate(30.2)"><path d="M-29 -25 A12 12 0 1 0 -17 -13" fill="none" stroke="rgba(150,160,178,0.05)" stroke-width="9"/><rect x="-29" y="-20.5" width="8" height="8"/><text x="-2" y="1" textLength="205" lengthAdjust="spacing">Gate Learn</text></g>
<g transform="translate(1713.6 52.3) rotate(30.2)"><path d="M-29 -25 A12 12 0 1 0 -17 -13" fill="none" stroke="rgba(150,160,178,0.05)" stroke-width="9"/><rect x="-29" y="-20.5" width="8" height="8"/><text x="-2" y="1" textLength="205" lengthAdjust="spacing">Gate Learn</text></g>
<g transform="translate(73.6 375.6) rotate(30.2)"><path d="M-29 -25 A12 12 0 1 0 -17 -13" fill="none" stroke="rgba(150,160,178,0.05)" stroke-width="9"/><rect x="-29" y="-20.5" width="8" height="8"/><text x="-2" y="1" textLength="205" lengthAdjust="spacing">Gate Learn</text></g>
<g transform="translate(401.6 375.6) rotate(30.2)"><path d="M-29 -25 A12 12 0 1 0 -17 -13" fill="none" stroke="rgba(150,160,178,0.05)" stroke-width="9"/><rect x="-29" y="-20.5" width="8" height="8"/><text x="-2" y="1" textLength="205" lengthAdjust="spacing">Gate Learn</text></g>
<g transform="translate(729.6 375.6) rotate(30.2)"><path d="M-29 -25 A12 12 0 1 0 -17 -13" fill="none" stroke="rgba(150,160,178,0.05)" stroke-width="9"/><rect x="-29" y="-20.5" width="8" height="8"/><text x="-2" y="1" textLength="205" lengthAdjust="spacing">Gate Learn</text></g>
<g transform="translate(1057.6 375.6) rotate(30.2)"><path d="M-29 -25 A12 12 0 1 0 -17 -13" fill="none" stroke="rgba(150,160,178,0.05)" stroke-width="9"/><rect x="-29" y="-20.5" width="8" height="8"/><text x="-2" y="1" textLength="205" lengthAdjust="spacing">Gate Learn</text></g>
<g transform="translate(1385.6 375.6) rotate(30.2)"><path d="M-29 -25 A12 12 0 1 0 -17 -13" fill="none" stroke="rgba(150,160,178,0.05)" stroke-width="9"/><rect x="-29" y="-20.5" width="8" height="8"/><text x="-2" y="1" textLength="205" lengthAdjust="spacing">Gate Learn</text></g>
<g transform="translate(1713.6 375.6) rotate(30.2)"><path d="M-29 -25 A12 12 0 1 0 -17 -13" fill="none" stroke="rgba(150,160,178,0.05)" stroke-width="9"/><rect x="-29" y="-20.5" width="8" height="8"/><text x="-2" y="1" textLength="205" lengthAdjust="spacing">Gate Learn</text></g>
<g transform="translate(73.6 698.9) rotate(30.2)"><path d="M-29 -25 A12 12 0 1 0 -17 -13" fill="none" stroke="rgba(150,160,178,0.05)" stroke-width="9"/><rect x="-29" y="-20.5" width="8" height="8"/><text x="-2" y="1" textLength="205" lengthAdjust="spacing">Gate Learn</text></g>
<g transform="translate(401.6 698.9) rotate(30.2)"><path d="M-29 -25 A12 12 0 1 0 -17 -13" fill="none" stroke="rgba(150,160,178,0.05)" stroke-width="9"/><rect x="-29" y="-20.5" width="8" height="8"/><text x="-2" y="1" textLength="205" lengthAdjust="spacing">Gate Learn</text></g>
<g transform="translate(729.6 698.9) rotate(30.2)"><path d="M-29 -25 A12 12 0 1 0 -17 -13" fill="none" stroke="rgba(150,160,178,0.05)" stroke-width="9"/><rect x="-29" y="-20.5" width="8" height="8"/><text x="-2" y="1" textLength="205" lengthAdjust="spacing">Gate Learn</text></g>
<g transform="translate(1057.6 698.9) rotate(30.2)"><path d="M-29 -25 A12 12 0 1 0 -17 -13" fill="none" stroke="rgba(150,160,178,0.05)" stroke-width="9"/><rect x="-29" y="-20.5" width="8" height="8"/><text x="-2" y="1" textLength="205" lengthAdjust="spacing">Gate Learn</text></g>
<g transform="translate(1385.6 698.9) rotate(30.2)"><path d="M-29 -25 A12 12 0 1 0 -17 -13" fill="none" stroke="rgba(150,160,178,0.05)" stroke-width="9"/><rect x="-29" y="-20.5" width="8" height="8"/><text x="-2" y="1" textLength="205" lengthAdjust="spacing">Gate Learn</text></g>
<g transform="translate(1713.6 698.9) rotate(30.2)"><path d="M-29 -25 A12 12 0 1 0 -17 -13" fill="none" stroke="rgba(150,160,178,0.05)" stroke-width="9"/><rect x="-29" y="-20.5" width="8" height="8"/><text x="-2" y="1" textLength="205" lengthAdjust="spacing">Gate Learn</text></g>
<g transform="translate(73.6 1022.2) rotate(30.2)"><path d="M-29 -25 A12 12 0 1 0 -17 -13" fill="none" stroke="rgba(150,160,178,0.05)" stroke-width="9"/><rect x="-29" y="-20.5" width="8" height="8"/><text x="-2" y="1" textLength="205" lengthAdjust="spacing">Gate Learn</text></g>
<g transform="translate(401.6 1022.2) rotate(30.2)"><path d="M-29 -25 A12 12 0 1 0 -17 -13" fill="none" stroke="rgba(150,160,178,0.05)" stroke-width="9"/><rect x="-29" y="-20.5" width="8" height="8"/><text x="-2" y="1" textLength="205" lengthAdjust="spacing">Gate Learn</text></g>
<g transform="translate(729.6 1022.2) rotate(30.2)"><path d="M-29 -25 A12 12 0 1 0 -17 -13" fill="none" stroke="rgba(150,160,178,0.05)" stroke-width="9"/><rect x="-29" y="-20.5" width="8" height="8"/><text x="-2" y="1" textLength="205" lengthAdjust="spacing">Gate Learn</text></g>
<g transform="translate(1057.6 1022.2) rotate(30.2)"><path d="M-29 -25 A12 12 0 1 0 -17 -13" fill="none" stroke="rgba(150,160,178,0.05)" stroke-width="9"/><rect x="-29" y="-20.5" width="8" height="8"/><text x="-2" y="1" textLength="205" lengthAdjust="spacing">Gate Learn</text></g>
<g transform="translate(1385.6 1022.2) rotate(30.2)"><path d="M-29 -25 A12 12 0 1 0 -17 -13" fill="none" stroke="rgba(150,160,178,0.05)" stroke-width="9"/><rect x="-29" y="-20.5" width="8" height="8"/><text x="-2" y="1" textLength="205" lengthAdjust="spacing">Gate Learn</text></g>
<g transform="translate(1713.6 1022.2) rotate(30.2)"><path d="M-29 -25 A12 12 0 1 0 -17 -13" fill="none" stroke="rgba(150,160,178,0.05)" stroke-width="9"/><rect x="-29" y="-20.5" width="8" height="8"/><text x="-2" y="1" textLength="205" lengthAdjust="spacing">Gate Learn</text></g>
</svg>
</body>
</html>
